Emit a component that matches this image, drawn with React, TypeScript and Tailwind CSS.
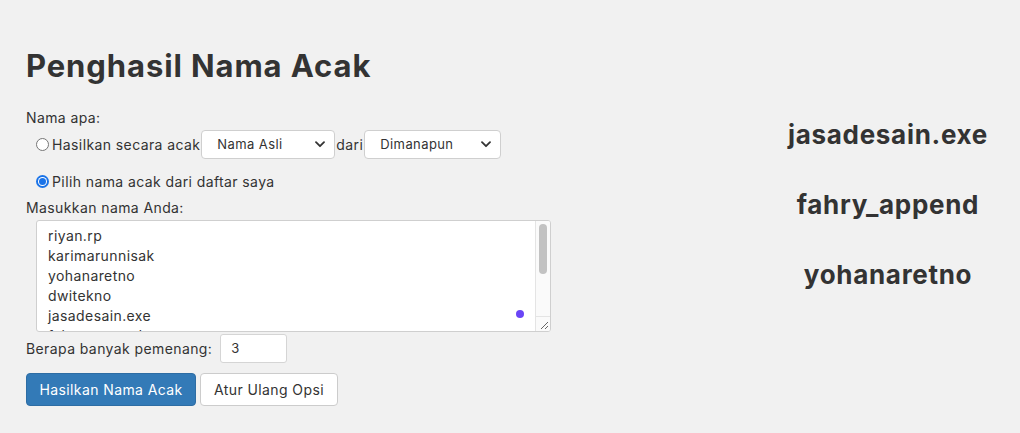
import React from "react";

const font = { fontFamily: "Inter, 'Noto Sans', sans-serif" };

function Chevron() {
  return (
    <svg width="10" height="7" viewBox="0 0 10 7" className="shrink-0">
      <path d="M1 1.2 L5 5.2 L9 1.2" fill="none" stroke="#333" strokeWidth="1.8" strokeLinecap="round" strokeLinejoin="round" />
    </svg>
  );
}

function FakeSelect({ label, w }: { label: string; w: string }) {
  return (
    <div className={`${w} h-[29px] bg-white border border-[#cfcfcf] rounded-[4px] flex items-center justify-between pl-[15px] pr-[9px] text-[13px] text-[#333]`}>
      <span>{label}</span>
      <Chevron />
    </div>
  );
}

export default function App() {
  const names = ["riyan.rp", "karimarunnisak", "yohanaretno", "dwitekno", "jasadesain.exe", "fahry_append"];
  return (
    <div className="w-[1020px] h-[433px] bg-[#f1f1f1] text-[#333] flex overflow-hidden tracking-[0.4px]" style={font}>
      <div className="flex-1 pl-[26px] pt-[47px]">
        <h1 className="text-[31px] leading-[38px] font-bold text-[#333] tracking-[0.9px]">Penghasil Nama Acak</h1>
        <div className="mt-[23px] text-[14px] leading-[20px]">Nama apa:</div>
        <div className="mt-[2px] pl-[10px] flex items-center h-[29px] text-[14px]">
          <span className="w-[13px] h-[13px] rounded-full border border-[#767676] bg-white shrink-0" />
          <span className="ml-[3px] mr-[1px]">Hasilkan secara acak</span>
          <FakeSelect label="Nama Asli" w="w-[134px]" />
          <span className="mx-[1px]">dari</span>
          <FakeSelect label="Dimanapun" w="w-[137px]" />
        </div>
        <div className="mt-[12px] pl-[10px] flex items-center h-[20px] text-[14px]">
          <span className="w-[13px] h-[13px] rounded-full bg-[#1a73e8] flex items-center justify-center shrink-0">
            <span className="w-[9px] h-[9px] rounded-full bg-white flex items-center justify-center">
              <span className="w-[7px] h-[7px] rounded-full bg-[#1a73e8]" />
            </span>
          </span>
          <span className="ml-[3px]">Pilih nama acak dari daftar saya</span>
        </div>
        <div className="mt-[7px] text-[14px] leading-[20px]">Masukkan nama Anda:</div>
        <div className="mt-[2px] ml-[10px] w-[515px] h-[112px] bg-white border border-[#cfcfcf] rounded-[3px] relative flex overflow-hidden">
          <div className="flex-1 pl-[11px] pt-[5px] text-[14px] leading-[20px] text-[#333]">
            {names.map((n) => (
              <div key={n}>{n}</div>
            ))}
          </div>
          <div className="w-[15px] border-l border-[#e4e4e4] bg-[#fafafa] flex flex-col">
            <div className="flex-1 pt-[3px] flex justify-center">
              <div className="w-[8px] h-[50px] rounded-full bg-[#c2c2c2]" />
            </div>
            <div className="h-[15px] border-t border-[#e4e4e4] flex items-end justify-end p-[1px]">
              <svg width="10" height="10" viewBox="0 0 10 10">
                <path d="M9 2 L2 9 M9 6 L6 9" stroke="#666" strokeWidth="1" />
              </svg>
            </div>
          </div>
          <span className="absolute left-[479px] top-[89px] w-[8px] h-[8px] rounded-full bg-[#6a45f6]" />
        </div>
        <div className="mt-[2px] flex items-center text-[14px]">
          <span>Berapa banyak pemenang:</span>
          <div className="ml-[8px] w-[67px] h-[29px] bg-white border border-[#d5d5d5] rounded-[3px] flex items-center pl-[10px] text-[13px]">3</div>
        </div>
        <div className="mt-[10px] flex gap-[4px] text-[14px]">
          <div className="w-[170px] h-[33px] rounded-[4px] bg-[#337ab7] border border-[#2e6da4] text-white flex items-center justify-center">Hasilkan Nama Acak</div>
          <div className="w-[138px] h-[33px] rounded-[4px] bg-white border border-[#cccccc] text-[#333] flex items-center justify-center">Atur Ulang Opsi</div>
        </div>
      </div>
      <div className="w-[264px] pt-[116px] flex flex-col items-center gap-[32px] text-[26px] leading-[38px] font-bold text-[#333] tracking-[0.7px]">
        <div>jasadesain.exe</div>
        <div>fahry_append</div>
        <div>yohanaretno</div>
      </div>
    </div>
  );
}
